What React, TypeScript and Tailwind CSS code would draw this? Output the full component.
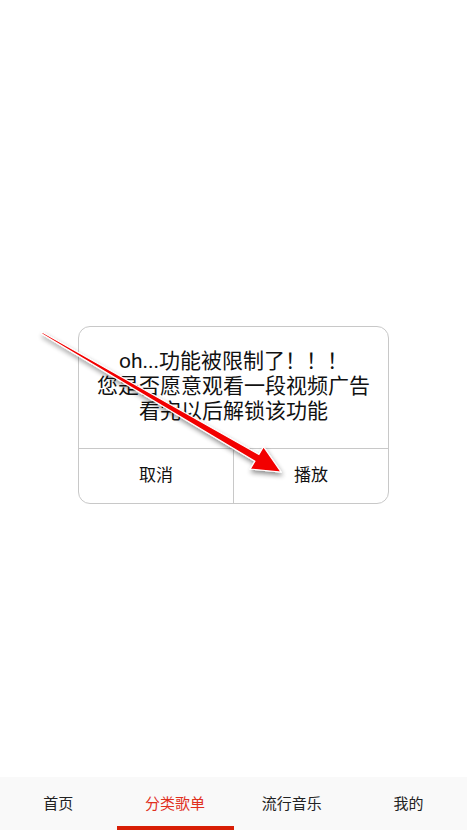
import React from "react";

const font = { fontFamily: '"Roboto", "Noto Sans CJK SC", sans-serif' };

export default function App() {
  const tabs = ["首页", "分类歌单", "流行音乐", "我的"];
  return (
    <div className="relative w-[467px] h-[830px] bg-white overflow-hidden" style={font}>
      <div className="absolute inset-0 flex items-center justify-center">
        <div className="w-[311px] border border-[#c8c8c8] rounded-[12px] bg-white flex flex-col">
          <div className="pt-[22px] pb-[24px] border-b border-[#c8c8c8] text-center text-[21px] leading-[25px] text-[#111]">
            <div>oh...功能被限制了！！！</div>
            <div>您是否愿意观看一段视频广告</div>
            <div>看完以后解锁该功能</div>
          </div>
          <div className="flex h-[54px]">
            <div className="flex-1 flex items-center justify-center text-[17px] text-[#111] border-r border-[#c8c8c8]">取消</div>
            <div className="flex-1 flex items-center justify-center text-[17px] text-[#111]">播放</div>
          </div>
        </div>
      </div>

      <div className="absolute left-0 right-0 bottom-0 h-[53px] bg-[#f9f9f9] grid grid-cols-4">
        {tabs.map((t, i) => (
          <div key={t} className="relative flex items-center justify-center pt-[1px]">
            <span className={"text-[15px] " + (i === 1 ? "text-[#e0301e]" : "text-[#222]")}>{t}</span>
            {i === 1 && <div className="absolute left-0 right-0 bottom-0 h-[4px] bg-[#d81e06]" />}
          </div>
        ))}
      </div>

      <svg className="absolute left-0 top-0 pointer-events-none" width="467" height="830" viewBox="0 0 467 830">
        <defs>
          <filter id="sh" x="-20%" y="-20%" width="140%" height="140%">
            <feGaussianBlur in="SourceAlpha" stdDeviation="2.5" />
            <feOffset dx="1" dy="3" result="b" />
            <feComponentTransfer>
              <feFuncA type="linear" slope="0.45" />
            </feComponentTransfer>
            <feMerge>
              <feMergeNode />
              <feMergeNode in="SourceGraphic" />
            </feMerge>
          </filter>
        </defs>
        <polygon
          filter="url(#sh)"
          points="42.4,332.3 258.9,454.4 263.5,446.6 281,472 250.3,469 254.9,461.2 41.6,333.7"
          fill="#f20000"
          stroke="#ffffff"
          strokeWidth="1.2"
          strokeLinejoin="miter"
        />
      </svg>
    </div>
  );
}
